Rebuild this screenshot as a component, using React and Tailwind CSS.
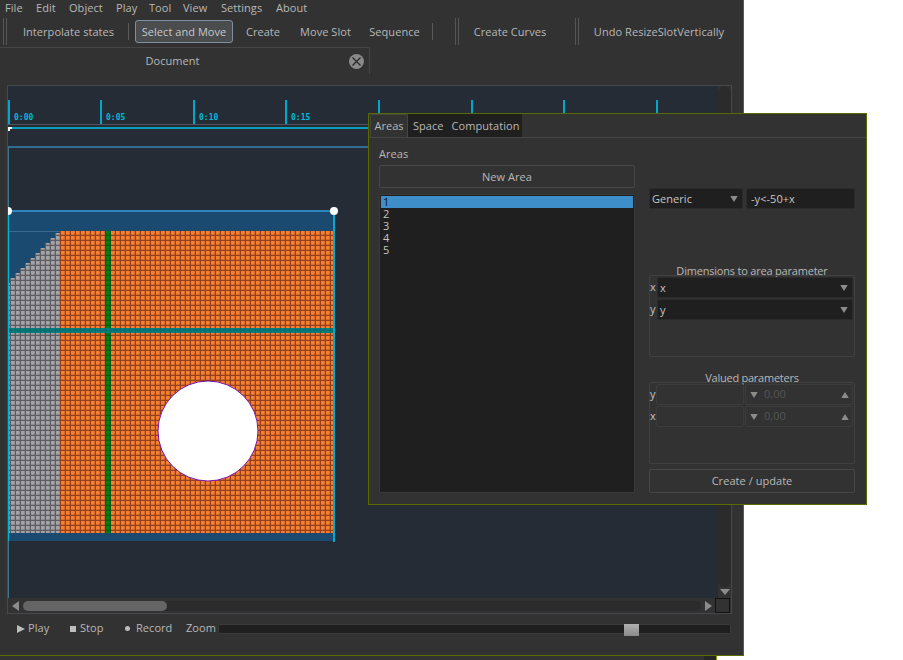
import React from 'react';

const menus = [
  ['File', 'w-[31px]'],
  ['Edit', 'w-[33px]'],
  ['Object', 'w-[47px]'],
  ['Play', 'w-[33px]'],
  ['Tool', 'w-[34px]'],
  ['View', 'w-[38px]'],
  ['Settings', 'w-[55px]'],
  ['About', 'w-[40px]'],
];

const ticks = [
  [9, '0:00'],
  [101, '0:05'],
  [194, '0:10'],
  [286, '0:15'],
  [379, ''],
  [472, ''],
  [564, ''],
  [657, ''],
];

const Handle = ({ className = '' }) => (
  <div className={`flex gap-[2px] h-[27px] ${className}`}>
    <div className="w-[1px] bg-[#565656]" />
    <div className="w-[1px] bg-[#565656]" />
  </div>
);

const Sep = ({ className = '' }) => <div className={`w-[1px] h-[17px] bg-[#5a5a5a] ${className}`} />;

const ToolItem = ({ className, children }) => (
  <div className={`h-[23px] pt-[1px] flex items-center justify-center ${className}`}>{children}</div>
);

const Tri = ({ dir, className = '', color = '#8c8c8c' }) => {
  const pts = {
    down: '0,0 10,0 5,6',
    up: '0,6 10,6 5,0',
    left: '7,0 7,10 0,5',
    right: '0,0 7,5 0,10',
  }[dir];
  const horiz = dir === 'left' || dir === 'right';
  return (
    <svg width={horiz ? 7 : 10} height={horiz ? 10 : 6} className={className}>
      <polygon points={pts} fill={color} />
    </svg>
  );
};

const Combo = ({ text, className = '' }) => (
  <div className={`h-[21px] pt-[1px] bg-[#1f1f1f] border border-[#2b2b2b] rounded-[2px] flex items-center justify-between pl-[2px] pr-[3px] text-[#c4c4c4] ${className}`}>
    <span>{text}</span>
    <Tri dir="down" className="scale-x-75" />
  </div>
);

const Cells = ({ id, line, fill }) => (
  <pattern id={id} x="61" y="231" width="5" height="5" patternUnits="userSpaceOnUse">
    <rect width="5" height="5" fill={line} />
    <rect width="3.7" height="3.7" fill={fill} />
  </pattern>
);

const Score = () => {
  // grey cells on the left climb up in steps until they reach the orange block
  const steps = [];
  for (let k = 1; k <= 11; k++) {
    const x = Math.max(8, 60 - 5 * k);
    steps.push(<rect key={k} x={x} y={233 + 5 * (k - 1)} width={60 - 5 * (k - 1) - x} height={5 * (11 - k) + 1} fill="url(#grey)" />);
  }
  return (
    <svg width="710" height="512" viewBox="8 86 710 512" className="block">
      <defs>
        <Cells id="orange" line="#94401c" fill="#f58031" />
        <Cells id="grey" line="#5c5c62" fill="#a3a3a8" />
        <Cells id="green" line="#0a5a14" fill="#00801a" />
        <Cells id="teal" line="#0b6a6c" fill="#007f80" />
      </defs>
      <rect x="8" y="86" width="710" height="512" fill="#262c35" />

      {ticks.map(([x, label]) => (
        <g key={x}>
          <rect x={x - 1} y="100" width="2" height="24" fill="#00a9c9" />
          {label && (
            <text x={x + 5} y="120" fill="#00b8d8" fontSize="8" fontWeight="bold" fontFamily="'DejaVu Sans Mono', monospace">
              {label}
            </text>
          )}
        </g>
      ))}
      <rect x="8" y="124" width="710" height="1" fill="#50555b" />
      <rect x="8" y="127" width="710" height="2" fill="#0b9dbd" />
      <polygon points="8,127 12,127 12,129 10,129 10,131 8,131" fill="#ffffff" />
      <rect x="8" y="146" width="710" height="2" fill="#2f6e92" />
      <rect x="8" y="147" width="1" height="451" fill="#3d7690" />

      <rect x="8" y="211" width="326" height="330" fill="#1a4a70" />
      <rect x="8" y="210" width="326" height="2" fill="#2f86bd" />
      <rect x="8" y="231" width="326" height="1" fill="#3d6a8c" />
      {steps}
      <rect x="60" y="231" width="274" height="302" fill="url(#orange)" />
      <rect x="8" y="283" width="52" height="250" fill="url(#grey)" />
      <rect x="105" y="231" width="6" height="302" fill="url(#green)" />
      <rect x="8" y="328" width="326" height="5" fill="url(#teal)" />
      <circle cx="208" cy="431" r="50" fill="#ffffff" stroke="#7a10a8" strokeWidth="1" />
      <rect x="8" y="211" width="1" height="330" fill="#00b4d8" />
      <rect x="333" y="211" width="2" height="331" fill="#0aa8c8" />
      <circle cx="8" cy="211" r="4" fill="#ffffff" />
      <circle cx="334" cy="211" r="4" fill="#ffffff" />
    </svg>
  );
};

const AreasDialog = () => (
  <div className="absolute left-[368px] top-[113px] w-[499px] h-[392px] bg-[#323232] border border-[#5a6a00] flex flex-col">
    <div className="flex h-[24px] pl-[1px] border-b border-[#454545]">
      <div className="w-[38px] h-[24px] border border-b-0 border-[#454545] rounded-t-[2px] flex items-center justify-center text-[#b8b8b8]">Areas</div>
      <div className="flex items-center bg-[#1f1f1f] h-[23px] w-[114px] pt-[1px] pl-[5px] gap-[8px] text-[#b8b8b8]">
        <span>Space</span>
        <span>Computation</span>
      </div>
    </div>
    <div className="flex-1 flex pl-[10px] pr-[11px] gap-[14px]">
      <div className="w-[256px] flex flex-col pt-[9px] pb-[11px]">
        <div className="h-[18px] leading-[13px] text-[#b8b8b8]">Areas</div>
        <div className="h-[23px] pt-[1px] border border-[#474747] rounded-[2px] flex items-center justify-center text-[#b8b8b8]">New Area</div>
        <div className="mt-[6px] flex-1 bg-[#1f1f1f] border border-[#3a3a3a] rounded-[2px] p-[1px] text-[#c4c4c4]">
          <div className="h-[12px] leading-[12px] pl-[2px] bg-[#3d8ec9] text-[#101010]">1</div>
          {[2, 3, 4, 5].map((n) => (
            <div key={n} className="h-[12px] leading-[12px] pl-[2px]">{n}</div>
          ))}
        </div>
      </div>
      <div className="w-[206px] flex flex-col pt-[50px] pb-[11px]">
        <div className="flex gap-[3px]">
          <Combo text="Generic" className="w-[94px]" />
          <div className="w-[109px] h-[21px] pt-[1px] bg-[#1f1f1f] border border-[#2b2b2b] rounded-[2px] pl-[4px] flex items-center text-[#c4c4c4]">-y&lt;-50+x</div>
        </div>
        <div className="mt-[57px] h-[9px] leading-[10px] text-center tracking-[-0.2px] text-[#b8b8b8]">Dimensions to area parameter</div>
        <div className="h-[82px] border border-[#404040] rounded-[2px] flex flex-col gap-[1px] pt-[1px] pr-[1px]">
          <div className="flex items-center">
            <span className="w-[7px] text-[#c4c4c4]">x</span>
            <Combo text="x" className="flex-1" />
          </div>
          <div className="flex items-center">
            <span className="w-[7px] text-[#c4c4c4]">y</span>
            <Combo text="y" className="flex-1" />
          </div>
        </div>
        <div className="mt-[16px] h-[9px] leading-[10px] text-center tracking-[-0.25px] text-[#b8b8b8]">Valued parameters</div>
        <div className="h-[82px] border border-[#404040] rounded-[2px] flex flex-col gap-[1px] pt-[1px] pr-[1px]">
          {['y', 'x'].map((l) => (
            <div key={l} className="flex items-center">
              <span className="w-[6px] text-[#c4c4c4]">{l}</span>
              <div className="w-[88px] h-[21px] border border-[#3c3c3c] rounded-[2px]" />
              <div className="ml-[1px] flex-1 h-[21px] border border-[#3c3c3c] rounded-[2px] flex items-center pl-[3px] pr-[2px]">
                <Tri dir="down" className="scale-x-75" />
                <span className="ml-[5px] flex-1 text-[#555555]">0,00</span>
                <Tri dir="up" className="scale-x-75" />
              </div>
            </div>
          ))}
        </div>
        <div className="mt-[5px] h-[24px] border border-[#474747] rounded-[2px] flex items-center justify-center text-[#b8b8b8]">Create / update</div>
      </div>
    </div>
  </div>
);

export default function App() {
  return (
    <div className="relative w-[903px] h-[660px] bg-white overflow-hidden text-[11px] tracking-[0.05px] text-[#b8b8b8] font-['Open_Sans',sans-serif]">
      <div className="w-[744px] h-[656px] bg-[#323232] border-r border-b border-[#5a6a00] flex flex-col">
        <div className="h-[16px] flex items-center pl-[5px] shrink-0">
          {menus.map(([m, w]) => (
            <div key={m} className={w}>{m}</div>
          ))}
        </div>
        <div className="h-[31px] flex items-center pl-[3px] shrink-0">
          <Handle />
          <ToolItem className="w-[119px] ml-[2px]">Interpolate states</ToolItem>
          <Sep />
          <div className="ml-[6px] w-[98px] h-[23px] pt-[1px] bg-[#4a4c4e] border border-[#7d8ea0] rounded-[3px] flex items-center justify-center text-[#c8c8c8]">Select and Move</div>
          <ToolItem className="w-[50px] ml-[5px]">Create</ToolItem>
          <ToolItem className="w-[65px] ml-[5px]">Move Slot</ToolItem>
          <ToolItem className="w-[63px] ml-[5px]">Sequence</ToolItem>
          <Sep className="ml-[6px]" />
          <Handle className="ml-[22px]" />
          <ToolItem className="w-[94px] ml-[4px]">Create Curves</ToolItem>
          <Handle className="ml-[18px]" />
          <ToolItem className="w-[148px] ml-[6px]">Undo ResizeSlotVertically</ToolItem>
        </div>
        <div className="h-[27px] w-[370px] shrink-0 border-t border-r border-[#454545] rounded-tr-[2px] flex items-center relative">
          <div className="flex-1 text-center pl-[26px] pr-[30px]">Document</div>
          <div className="mr-[5px] w-[15px] h-[15px] rounded-full bg-[#8a8a8a] flex items-center justify-center">
            <svg width="9" height="9" viewBox="0 0 9 9">
              <path d="M0.5 0.5 L8.5 8.5 M8.5 0.5 L0.5 8.5" stroke="#2a2a2a" strokeWidth="1.3" />
            </svg>
          </div>
        </div>
        <div className="mt-[11px] ml-[7px] w-[725px] h-[529px] shrink-0 border border-[#45494d] flex flex-col">
          <div className="flex h-[512px]">
            <Score />
            <div className="w-[13px] flex flex-col items-center justify-end bg-[#323232] pb-[3px]">
              <div className="flex-1 w-[13px] bg-[#2b2b2b] rounded-full mb-[2px]" />
              <Tri dir="down" />
            </div>
          </div>
          <div className="flex-1 flex items-center pl-[4px] bg-[#323232]">
            <Tri dir="left" />
            <div className="ml-[4px] w-[678px] h-[10px] rounded-full bg-[#2b2b2b]">
              <div className="w-[144px] h-[10px] rounded-full bg-[#656565]" />
            </div>
            <Tri dir="right" className="ml-[4px]" />
            <div className="ml-[3px] w-[15px] h-[15px] border border-[#111111]" />
          </div>
        </div>
        <div className="flex-1 flex items-center pl-[17px] pr-[12px] pb-[12px]">
          <svg width="8" height="8" className="mr-[3px]"><polygon points="0,0 8,4 0,8" fill="#bdbdbd" /></svg>
          <span className="w-[42px]">Play</span>
          <div className="w-[6px] h-[6px] bg-[#bdbdbd] mr-[4px]" />
          <span className="w-[45px]">Stop</span>
          <div className="w-[5px] h-[5px] rounded-full bg-[#bdbdbd] mr-[6px]" />
          <span className="w-[50px]">Record</span>
          <span className="w-[32px]">Zoom</span>
          <div className="flex-1 h-[10px] bg-[#1f1f1f] border border-[#3a3a3a] rounded-[2px] relative">
            <div className="absolute left-[405px] -top-[1px] w-[15px] h-[12px] bg-gradient-to-b from-[#b0b0b0] to-[#8a8a8a]" />
          </div>
        </div>
      </div>
      <div className="h-[4px] w-[717px] bg-[#323232] border-r border-[#8aa000] flex justify-end">
        <div className="w-[12px] bg-[#262626]" />
      </div>
      <AreasDialog />
    </div>
  );
}
